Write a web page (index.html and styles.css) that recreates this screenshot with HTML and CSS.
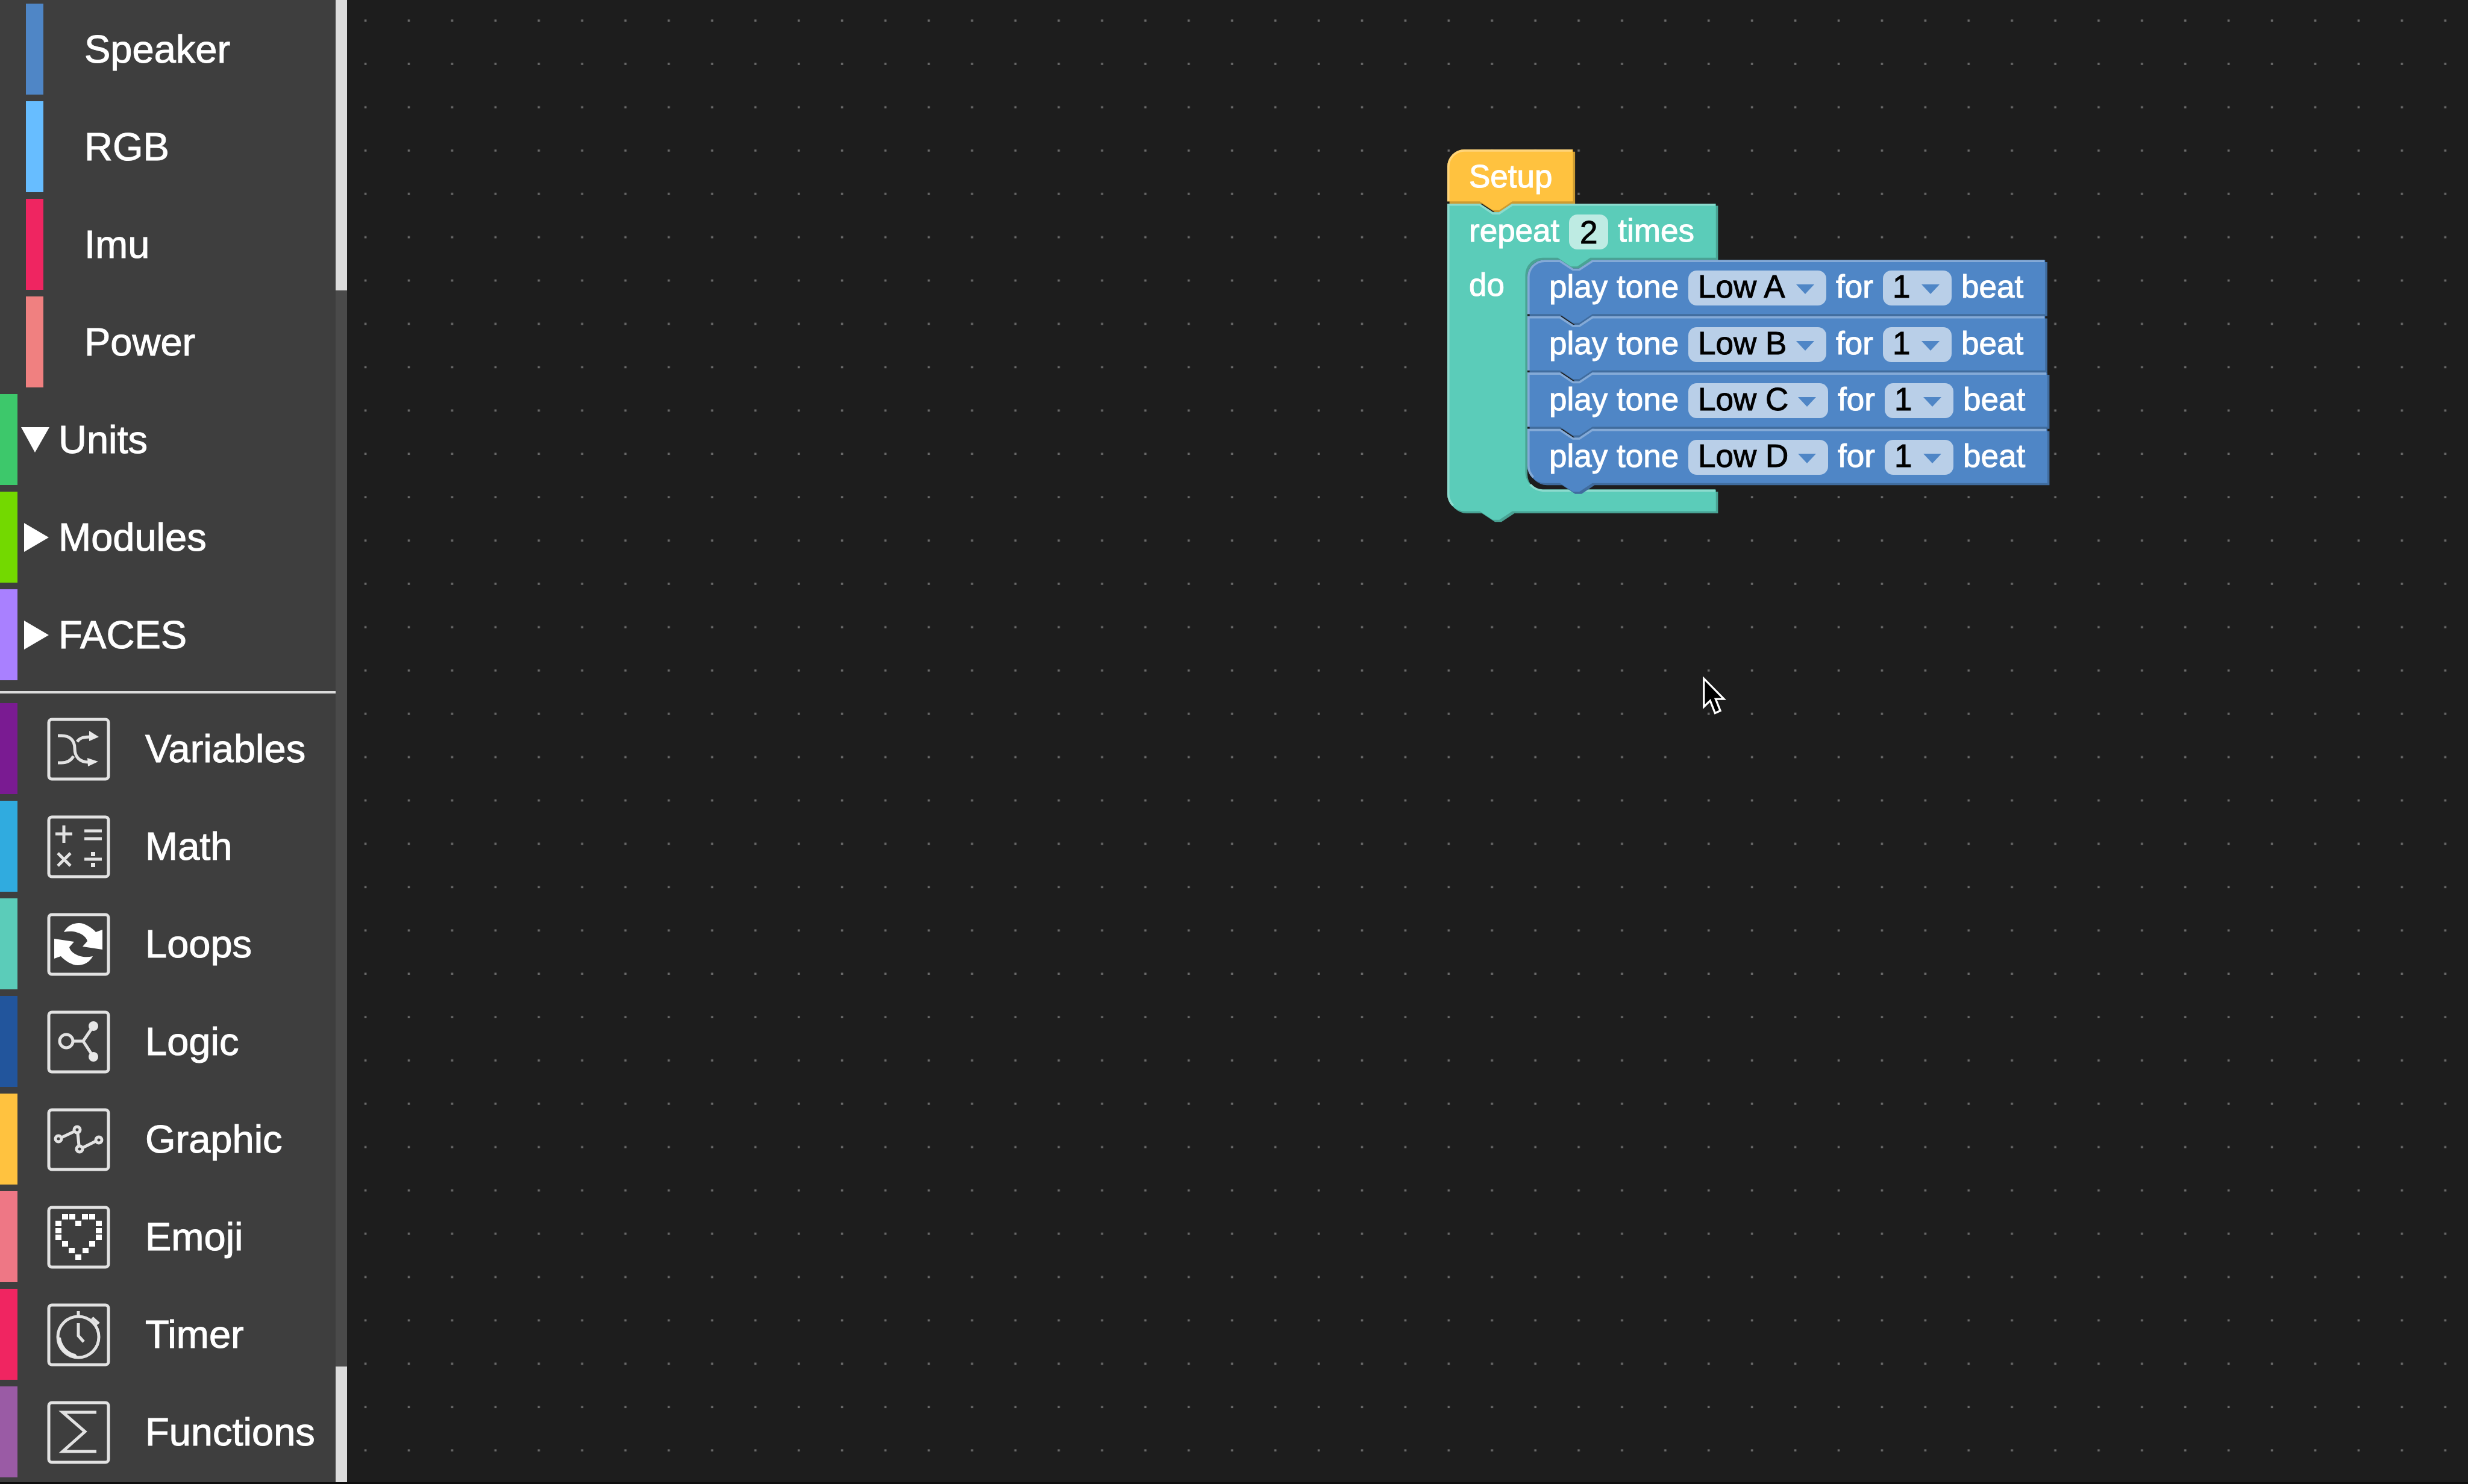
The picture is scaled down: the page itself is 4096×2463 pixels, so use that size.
FILE: index.html
```html
<!DOCTYPE html>
<html lang="en">
<head>
<meta charset="utf-8">
<title>Block editor</title>
<link rel="stylesheet" href="styles.css">
</head>
<body>
<div class="app">
  <aside class="sidebar">
    <nav class="toolbox" aria-label="Toolbox">
      <ul class="rows">
        <li><button class="row nested speaker">Speaker</button></li>
        <li><button class="row nested rgb">RGB</button></li>
        <li><button class="row nested imu">Imu</button></li>
        <li><button class="row nested power">Power</button></li>
        <li><button class="row group units" aria-expanded="true"><svg class="caret" viewBox="0 0 48 48"><path d="M0 3H47L23 45Z"/></svg>Units</button></li>
        <li><button class="row group modules" aria-expanded="false"><svg class="caret" viewBox="0 0 48 48"><path d="M5 0V48L46 24Z"/></svg>Modules</button></li>
        <li><button class="row group faces" aria-expanded="false"><svg class="caret" viewBox="0 0 48 48"><path d="M5 0V48L46 24Z"/></svg>FACES</button></li>
      </ul>
      <hr class="divider">
      <ul class="rows">
        <li><button class="row variables"><svg class="icon" viewBox="0 0 105 105"><rect class="frame" x="3" y="3" width="99" height="99" rx="5"/><path d="M18 30H24C38 30 46 38 46 51C46 65 54 74 69 74M18 75H24C34 75 40 71 44 64M50 40C54 34 60 32 71 32"/><path class="solid" d="M70 22L86 32L70 39ZM67 67L85 73L68 81Z"/></svg>Variables</button></li>
        <li><button class="row math"><svg class="icon" viewBox="0 0 105 105"><rect class="frame" x="3" y="3" width="99" height="99" rx="5"/><path d="M14 31H42M28 17V46M62 26H91M62 39H91M18 63L39 84M39 63L18 84M62 73H91"/><path class="solid" d="M73 61H80V68H73ZM73 79H80V86H73Z"/></svg>Math</button></li>
        <li><button class="row loops"><svg class="icon" viewBox="0 0 105 105"><rect class="frame" x="3" y="3" width="99" height="99" rx="5"/><path class="solid bright" d="M28 32C33 22 43 17 53 17C63 17 75 25 81 32L92 28V61L59 56L67 47C65 37 47 27 28 32Z"/><path class="solid bright" transform="rotate(180 52 52)" d="M28 32C33 22 43 17 53 17C63 17 75 25 81 32L92 28V61L59 56L67 47C65 37 47 27 28 32Z"/></svg>Loops</button></li>
        <li><button class="row logic"><svg class="icon" viewBox="0 0 105 105"><rect class="frame" x="3" y="3" width="99" height="99" rx="5"/><circle cx="32" cy="51" r="11"/><path d="M44 51H60L77 26M60 51L77 77"/><circle class="solid" cx="77" cy="26" r="8"/><circle class="solid" cx="77" cy="77" r="8"/></svg>Logic</button></li>
        <li><button class="row graphic"><svg class="icon" viewBox="0 0 105 105"><rect class="frame" x="3" y="3" width="99" height="99" rx="5"/><circle cx="19" cy="51" r="5"/><circle cx="50" cy="36" r="5"/><circle cx="54" cy="68" r="5"/><circle cx="86" cy="53" r="5"/><path d="M24 49L45 39M51 42L53 62M59 66L81 55"/></svg>Graphic</button></li>
        <li><button class="row emoji"><svg class="icon" viewBox="0 0 105 105"><rect class="frame" x="3" y="3" width="99" height="99" rx="5"/><path class="solid bright" d="M25 14h10v9h-10zM37 14h10v9h-10zM58 14h10v9h-10zM70 14h10v9h-10zM14 25h10v9h-10zM47 25h10v9h-10zM81 25h10v9h-10zM14 37h10v9h-10zM81 37h10v9h-10zM14 48h10v9h-10zM81 48h10v9h-10zM25 59h10v9h-10zM70 59h10v9h-10zM36 70h10v9h-10zM59 70h10v9h-10zM47 81h10v9h-10z"/></svg>Emoji</button></li>
        <li><button class="row timer"><svg class="icon" viewBox="0 0 105 105"><rect class="frame" x="3" y="3" width="99" height="99" rx="5"/><circle cx="52" cy="56" r="34"/><path d="M52 13V22M52 33V54L61 64M75 24L86 34M72 28L82 37"/><path class="solid" d="M18 56C18 76 34 90 52 90L47 84C36 82 25 72 23 57Z"/></svg>Timer</button></li>
        <li><button class="row functions"><svg class="icon" viewBox="0 0 105 105"><rect class="frame" x="3" y="3" width="99" height="99" rx="5"/><path d="M82 19H26L63 51L26 84H82"/></svg>Functions</button></li>
      </ul>
    </nav>
    <div class="scroll"><span class="thumb upper"></span><span class="thumb lower"></span></div>
  </aside>

  <main class="workspace">
    <svg class="grid" viewBox="640 0 3916 2740" preserveAspectRatio="xMinYMin slice" aria-hidden="true">
      <defs><pattern id="dots" width="80" height="80" patternUnits="userSpaceOnUse"><rect x="32" y="36" width="4" height="4" fill="#6a6a6a"/></pattern></defs>
      <rect x="640" width="3916" height="2740" fill="url(#dots)"/>
    </svg>

    <div class="stack">
      <!-- Block outlines in editor units: corner radius 8, notch 15 wide and 4 deep -->
      <svg class="shapes" viewBox="0 0 279 173" aria-hidden="true">
        <defs>
          <path id="setup" d="M0 8a8 8 0 0 1 8 -8H58V24H30l-6 4h-3l-6 -4H0Z"/>
          <path id="loop" d="M0 25H15l6 4h3l6 -4H124V50H66l-6 4h-3l-6 -4H44a8 8 0 0 0 -8 8V149a8 8 0 0 0 8 8H124V167H30l-6 4h-3l-6 -4H8a8 8 0 0 1 -8 -8Z"/>
          <path id="tone-a" d="M37 59a8 8 0 0 1 8 -8H52l6 4h3l6 -4H276V76H67l-6 4h-3l-6 -4H37Z"/>
          <path id="tone-b" d="M37 77H52l6 4h3l6 -4H276V102H67l-6 4h-3l-6 -4H37Z"/>
          <path id="tone-c" d="M37 103H52l6 4h3l6 -4H277V128H67l-6 4h-3l-6 -4H37Z"/>
          <path id="tone-d" d="M37 129H52l6 4h3l6 -4H277V154H67l-6 4h-3l-6 -4H45a8 8 0 0 1 -8 -8Z"/>
        </defs>
        <use href="#setup" class="setup-dark" transform="translate(1 1)"/>
        <use href="#setup" class="setup-fill"/>
        <path class="setup-light" d="M0.5 24V8a7.5 7.5 0 0 1 7.5 -7.5H57.5"/>
        <use href="#loop" class="loop-dark" transform="translate(1 1)"/>
        <use href="#loop" class="loop-fill"/>
        <path class="loop-light" d="M2.7 164.3A7.5 7.5 0 0 1 0.5 159V25.5H15l6 4h3l6 -4H123.5M38.3 154.7A8.5 8.5 0 0 0 44 157.5H123.5"/>
        <use href="#tone-a" class="tone-dark" transform="translate(1 1)"/>
        <use href="#tone-a" class="tone-fill"/>
        <path class="tone-light" d="M37.5 76V59a7.5 7.5 0 0 1 7.5 -7.5H52l6 4h3l6 -4H275.5"/>
        <use href="#tone-b" class="tone-dark" transform="translate(1 1)"/>
        <use href="#tone-b" class="tone-fill"/>
        <path class="tone-light" d="M37.5 102V77.5H52l6 4h3l6 -4H275.5"/>
        <use href="#tone-c" class="tone-dark" transform="translate(1 1)"/>
        <use href="#tone-c" class="tone-fill"/>
        <path class="tone-light" d="M37.5 128V103.5H52l6 4h3l6 -4H276.5"/>
        <use href="#tone-d" class="tone-dark" transform="translate(1 1)"/>
        <use href="#tone-d" class="tone-fill"/>
        <path class="tone-light" d="M39.7 151.3A7.5 7.5 0 0 1 37.5 146V129.5H52l6 4h3l6 -4H276.5"/>
      </svg>

      <div class="line head">Setup</div>
      <div class="line head repeat"><label for="count">repeat</label><input id="count" class="count" value="2"><span>times</span></div>
      <div class="body">
        <div class="do">do</div>
        <div class="tones">
          <div class="line">play tone
            <span class="pick note"><select aria-label="Tone"><option>Low A</option></select><svg viewBox="0 0 30 16"><path d="M0 0H30L15 16Z"/></svg></span>for
            <span class="pick beats"><select aria-label="Beats"><option>1</option></select><svg viewBox="0 0 30 16"><path d="M0 0H30L15 16Z"/></svg></span>beat</div>
          <div class="line">play tone
            <span class="pick note"><select aria-label="Tone"><option>Low B</option></select><svg viewBox="0 0 30 16"><path d="M0 0H30L15 16Z"/></svg></span>for
            <span class="pick beats"><select aria-label="Beats"><option>1</option></select><svg viewBox="0 0 30 16"><path d="M0 0H30L15 16Z"/></svg></span>beat</div>
          <div class="line">play tone
            <span class="pick note wide"><select aria-label="Tone"><option>Low C</option></select><svg viewBox="0 0 30 16"><path d="M0 0H30L15 16Z"/></svg></span>for
            <span class="pick beats"><select aria-label="Beats"><option>1</option></select><svg viewBox="0 0 30 16"><path d="M0 0H30L15 16Z"/></svg></span>beat</div>
          <div class="line">play tone
            <span class="pick note wide"><select aria-label="Tone"><option>Low D</option></select><svg viewBox="0 0 30 16"><path d="M0 0H30L15 16Z"/></svg></span>for
            <span class="pick beats"><select aria-label="Beats"><option>1</option></select><svg viewBox="0 0 30 16"><path d="M0 0H30L15 16Z"/></svg></span>beat</div>
        </div>
      </div>
    </div>

    <svg class="pointer" viewBox="0 0 140 220" aria-hidden="true"><path d="M6 14V170L41 136L68 205L97 192L71 127H117Z"/></svg>
  </main>
</div>
</body>
</html>
```
FILE: styles.css
```css
* { box-sizing: border-box; }

body {
  margin: 0;
  background: #0e0e0e;
  color: #fff;
  font-family: "Liberation Sans", Arial, sans-serif;
  -webkit-text-stroke: 1px;
}

button, input, select { font: inherit; color: inherit; }

.app {
  display: grid;
  grid-template-columns: 576px 1fr;
  height: 100vh;
  padding-bottom: 3px;
  overflow: hidden;
}

/* Toolbox */
.sidebar {
  display: grid;
  grid-template-columns: 1fr 19px;
  min-height: 0;
  background: #3e3e3e;
}

.toolbox {
  padding-top: 6px;
  min-height: 0;
  overflow: hidden;
}

.rows {
  display: grid;
  gap: 11px;
  margin: 0;
  padding: 0;
  list-style: none;
}

.row {
  display: flex;
  align-items: center;
  width: 100%;
  height: 151px;
  padding: 0 0 0 49px;
  border: 0;
  border-left: 29px solid var(--tint);
  background: none;
  font-size: 65px;
  line-height: 151px;
  text-align: left;
  white-space: nowrap;
}

.nested {
  width: auto;
  margin-left: 43px;
  padding-left: 68px;
}

.group { padding-left: 6px; }

.caret {
  width: 48px;
  height: 48px;
  margin-right: 14px;
  fill: #fff;
}

.icon {
  width: 105px;
  height: 105px;
  margin: 2px 58px 0 0;
  fill: none;
  stroke: #e2e2e2;
  stroke-width: 5;
}

.icon .solid { fill: #e8e8e8; stroke: none; }
.icon .bright { fill: #fff; }

.divider {
  height: 4px;
  margin: 18px 0 16px;
  border: 0;
  background: #dcdcdc;
}

.speaker { --tint: #4f86c6; }
.rgb { --tint: #67bdff; }
.imu { --tint: #ef2561; }
.power { --tint: #f08080; }
.units { --tint: #3dc86b; }
.modules { --tint: #73d900; }
.faces { --tint: #a980ff; }
.variables { --tint: #7a1b92; }
.math { --tint: #30abdf; }
.loops { --tint: #5bccb9; }
.logic { --tint: #22559c; }
.graphic { --tint: #ffc23f; }
.emoji { --tint: #ee7785; }
.timer { --tint: #f02561; }
.functions { --tint: #9a5ba5; }

.scroll {
  display: flex;
  flex-direction: column;
  justify-content: space-between;
  background: #4a4a4a;
}

.thumb { background: #dcdcdc; }
.upper { height: 482px; }
.lower { height: 192px; }

/* Canvas */
.workspace {
  position: relative;
  overflow: hidden;
  background: #1d1d1d;
}

.grid {
  display: block;
  width: 100%;
  height: 100%;
}

.stack {
  position: absolute;
  top: 248px;
  left: 1826px;
  width: 1003px;
  height: 622px;
  font-size: 53px;
  line-height: 90px;
  white-space: nowrap;
}

.shapes {
  position: absolute;
  inset: 0;
  width: 100%;
  height: 100%;
}

.setup-fill { fill: #ffc23f; }
.setup-dark { fill: #cc9b32; }
.setup-light { stroke: #ffd479; }
.loop-fill { fill: #5bccb9; }
.loop-dark { fill: #49a394; }
.loop-light { stroke: #8cdbce; }
.tone-fill { fill: #4f86c6; }
.tone-dark { fill: #406c9e; }
.tone-light { stroke: #84aad7; }
.setup-light, .loop-light, .tone-light { fill: none; stroke-width: 1; }

.line {
  position: relative;
  display: flex;
  align-items: flex-start;
  gap: 16px;
  padding-left: 36px;
}

.head { height: 90px; }
.repeat { height: 93px; }

.count {
  width: 65px;
  height: 58px;
  margin-top: 18px;
  padding: 0;
  border: 0;
  border-radius: 14px;
  background: #beebe3;
  color: #000;
  line-height: 54px;
  text-align: center;
}

.body {
  position: relative;
  display: grid;
  grid-template-columns: 133px 1fr;
  height: 374px;
}

.do {
  padding-left: 36px;
  line-height: 84px;
}

.tones {
  display: grid;
  grid-auto-rows: 1fr;
}

.pick {
  position: relative;
  height: 58px;
  margin-top: 18px;
}

.note { width: 229px; }
.wide { width: 232px; }
.beats { width: 114px; }

.pick select {
  display: block;
  width: 100%;
  height: 58px;
  padding: 0 0 4px 16px;
  border: 0;
  border-radius: 14px;
  appearance: none;
  background: #b9cfe8;
  color: #000;
  line-height: 54px;
}

.pick svg {
  position: absolute;
  top: 23px;
  right: 20px;
  width: 30px;
  height: 16px;
  fill: #4f86c6;
}

.pointer {
  position: absolute;
  top: 1122px;
  left: 2250px;
  width: 42px;
  height: 66px;
  fill: #000;
  stroke: #fff;
  stroke-width: 11;
}
```
